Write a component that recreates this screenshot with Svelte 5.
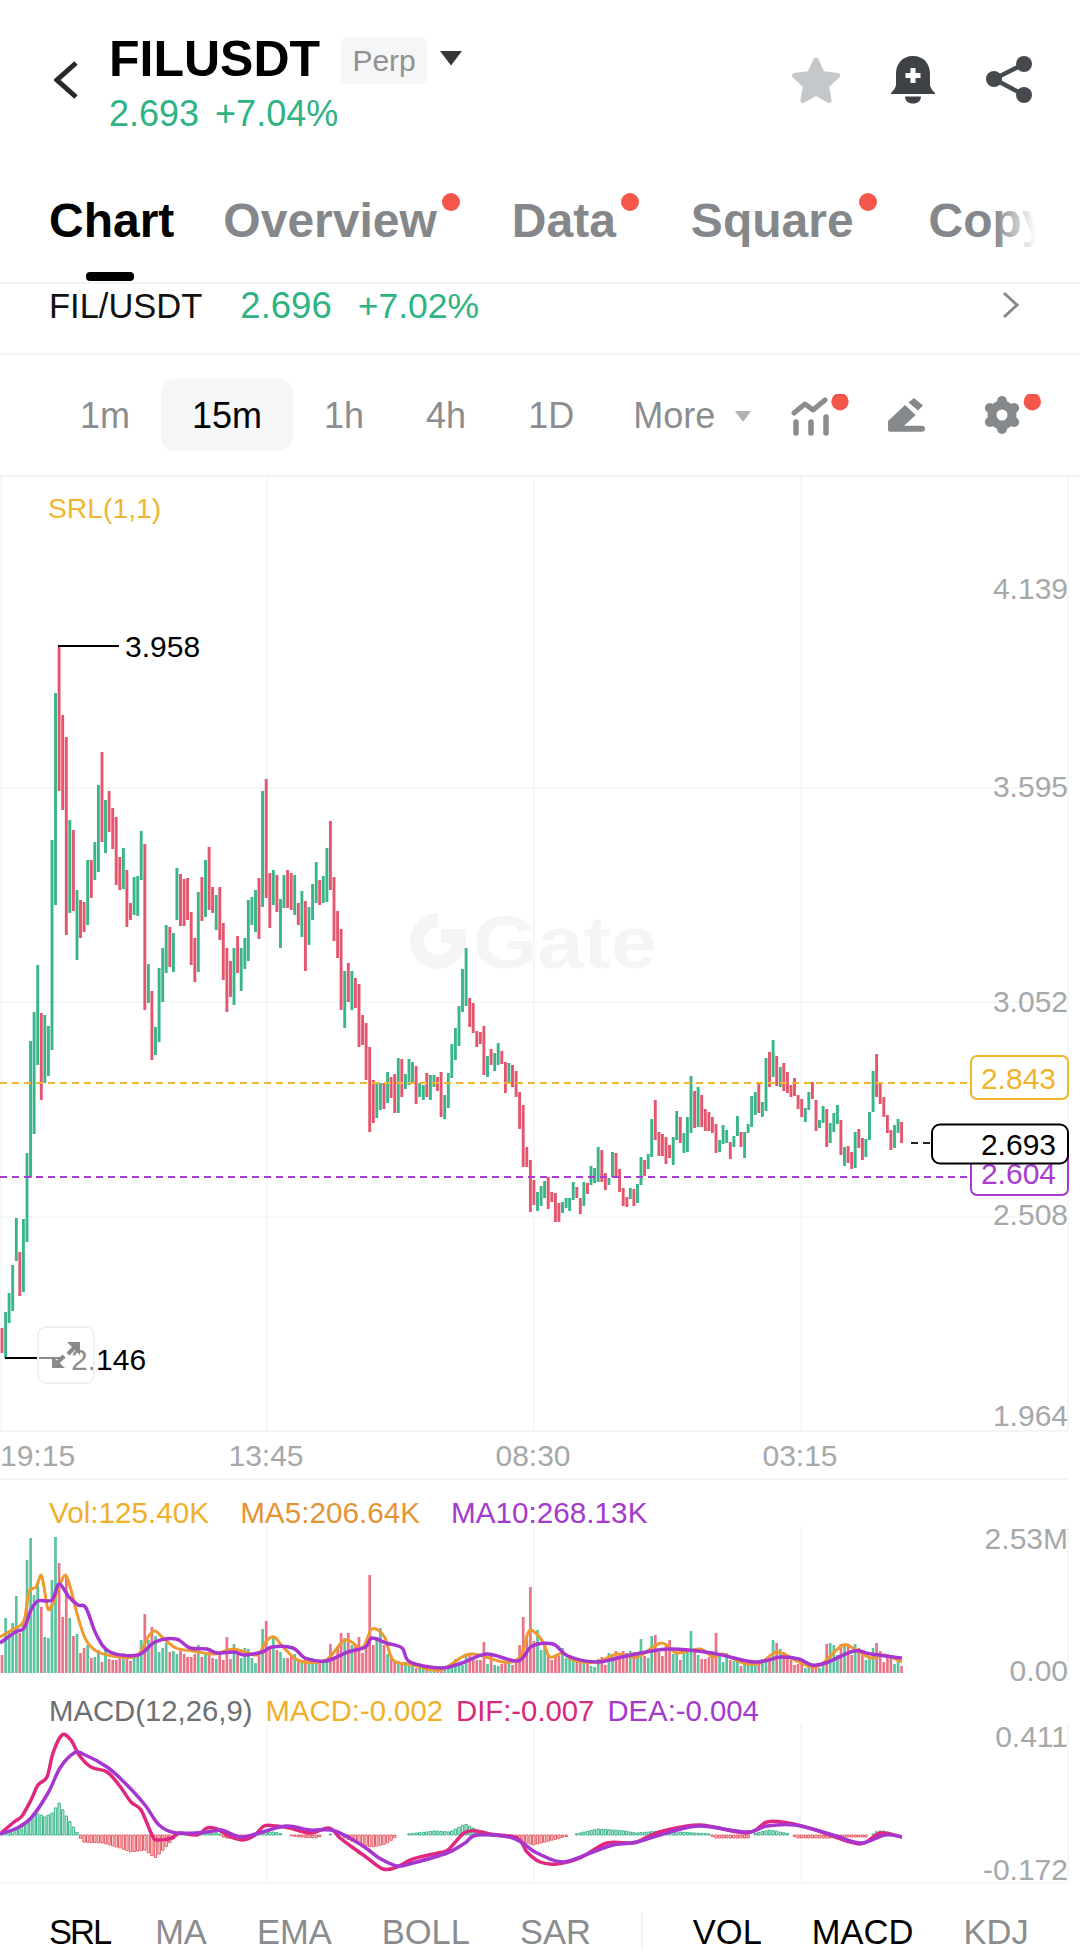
<script>
  const P = 3.57;
  const xOf = (i) => 2 + P * i;

  const raw = `r1328-1353 g1312-1358 g1293-1323 g1265-1311 g1218-1261 r1252-1296 g1219-1292 g1153-1242 g1041-1178 g1012-1134 g965-1065 r1013-1100 g1015-1083 g1026-1076 g840-1050 g693-905 r647-791 r715-810 r737-935 g820-913 r830-911 g890-960 r900-938 r902-932 g860-925 r860-898 g842-880 g785-872 r752-842 g800-853 r791-832 r808-849 r817-885 r857-890 g848-889 r870-927 r903-920 g877-915 g876-916 g831-880 r844-1010 g964-1003 r991-1060 g1027-1055 g968-1042 g948-1002 g925-973 r927-967 g933-972 g868-920 r874-926 r879-926 r878-920 r912-965 r938-982 g892-972 r877-921 g860-917 r847-910 r887-913 g895-930 r887-940 r923-980 r948-1012 r961-997 g948-1005 r936-973 g948-991 g938-969 g900-961 g897-925 g890-932 r878-939 g791-907 r779-898 r873-928 g870-905 r875-912 g899-948 g875-908 r870-908 r873-910 g875-915 r903-925 g891-937 r901-971 g907-945 g884-920 g862-903 r880-905 g876-903 g848-902 r821-890 r877-941 r911-958 r929-1010 g971-1028 r963-1002 g971-1010 r978-1008 r984-1047 r1015-1045 r1023-1080 r1047-1132 r1080-1123 g1082-1118 g1083-1110 r1083-1109 g1072-1103 r1077-1098 r1074-1113 g1058-1113 r1059-1097 g1074-1089 g1059-1085 g1062-1082 r1066-1104 g1083-1097 g1085-1100 r1073-1097 g1075-1100 g1075-1087 r1077-1091 r1072-1117 g1095-1119 g1073-1108 g1044-1078 g1028-1060 g1006-1046 g969-1012 g948-1006 r998-1027 r1003-1033 r1031-1047 r1032-1044 r1026-1075 g1056-1077 r1049-1065 g1053-1071 g1043-1065 r1051-1064 r1062-1093 g1063-1084 r1065-1087 r1071-1097 r1092-1129 r1105-1167 r1147-1167 r1160-1212 r1180-1205 g1192-1211 g1186-1206 g1181-1198 r1177-1209 r1192-1202 r1193-1222 r1203-1222 g1202-1213 g1198-1208 g1198-1211 g1182-1200 r1187-1198 r1198-1214 g1182-1206 r1183-1194 g1166-1185 g1168-1183 g1147-1182 r1150-1182 r1173-1190 g1178-1185 g1152-1177 r1153-1178 r1169-1192 r1188-1206 r1197-1207 g1188-1199 r1189-1206 g1184-1203 g1157-1185 r1160-1176 g1154-1169 g1119-1157 r1100-1140 r1132-1156 r1134-1156 r1137-1164 r1145-1158 g1137-1165 g1111-1140 r1117-1143 g1133-1153 g1117-1152 g1076-1133 r1091-1128 g1087-1127 r1095-1127 r1109-1131 r1112-1131 r1117-1133 r1124-1153 g1140-1152 g1125-1144 g1130-1143 r1142-1159 g1136-1147 g1116-1136 r1132-1147 g1132-1158 g1124-1133 g1096-1127 g1092-1115 r1084-1113 g1102-1117 g1058-1111 r1052-1087 g1040-1077 r1056-1086 g1067-1087 r1063-1091 r1072-1093 r1085-1097 r1078-1096 r1095-1109 r1099-1117 g1108-1122 g1092-1110 r1082-1099 r1100-1131 g1120-1128 g1106-1123 r1109-1147 g1123-1143 g1113-1132 g1105-1124 r1120-1155 g1147-1166 r1146-1163 r1152-1169 g1132-1168 r1129-1148 r1138-1160 g1139-1157 g1112-1140 g1071-1112 r1054-1097 r1083-1104 r1097-1117 r1115-1133 r1130-1150 g1125-1148 g1119-1133 r1122-1143`;

  const candles = raw.split(/\s+/).map((t, i) => {
    const [top, bot] = t.slice(1).split('-').map(Number);
    return { i, x: xOf(i), c: t[0], top, bot };
  });

  const candlePath = (c) =>
    candles.filter((k) => k.c === c).map((k) => `M${k.x.toFixed(1)} ${k.top}V${k.bot}`).join('');

  const ma5 = [[0,1637],[12,1630],[21,1625],[25,1617],[29,1592],[36,1587],[41,1575],[44,1587],[48,1609],[53,1603],[59,1587],[65.5,1575],[71,1590],[78,1617],[86,1640],[98,1652],[121,1657],[138,1655],[148,1637],[155,1631],[162,1637],[176,1648],[193,1651],[214,1654],[234,1649],[257,1655],[265.5,1642],[274,1637],[284,1648],[300,1661],[326,1660],[345,1640],[362,1648],[372,1629],[384.5,1637],[393,1660],[413,1665],[440,1670],[470,1654],[503,1662],[520,1657],[528,1633],[533,1631],[543,1642],[550,1657],[563,1653],[573,1660],[597,1662],[617,1654],[637,1657],[658,1644],[667,1645],[677,1653],[700,1649],[713,1657],[723,1654],[743,1663],[760,1663],[777,1652],[795,1660],[812,1667],[823,1663],[843,1645],[856,1650],[871,1658],[885,1655],[902,1662]];
  const ma10 = [[0,1643],[15.5,1632],[24,1628],[31,1610],[38,1601],[52,1600],[59,1584],[69,1597],[78,1605],[86,1608],[96.5,1635],[110,1652],[138,1655],[155,1642],[176,1639],[190,1648],[207,1649],[217,1653],[234,1652],[245,1655],[262,1652],[272,1647],[293,1648],[305,1658],[326,1661],[348,1652],[365.5,1647],[372,1638],[386,1643],[402,1648],[410,1662],[441,1668],[462,1663],[487,1654],[518,1661],[532,1646],[553,1644],[568,1656],[597,1662],[626,1656],[668,1649],[712,1653],[754,1662],[781,1657],[799,1659],[812,1665],[826,1663],[854,1651],[871,1654],[902,1658]];
  const dif = [[0,1834],[14,1822],[22,1816],[31,1800],[38,1785],[47,1777],[53,1753],[62,1735],[71,1740],[79,1755],[91,1767],[107,1772],[119,1785],[131,1802],[141,1810],[152,1835],[157,1840],[172,1838],[179,1833],[197,1835],[207,1828],[217,1829],[231,1837],[243,1840],[255,1835],[264,1826],[276,1826],[290,1828],[310,1833],[329,1828],[340,1838],[352,1847],[366,1857],[383,1869],[397,1867],[413,1859],[438,1853],[448,1850],[464,1833],[476,1831],[490,1834],[517,1838],[527,1852],[540,1862],[557,1864],[580,1858],[607,1843],[633,1843],[647,1837],[663,1831],[700,1825],[747,1833],[767,1822],[788,1823],[816,1830],[850,1842],[864,1843],[881,1833],[902,1837]];
  const dea = [[0,1834],[17,1828],[31,1818],[48,1793],[60,1768],[74,1753],[83,1754],[107,1767],[124,1782],[145,1805],[159,1825],[176,1833],[207,1832],[221,1830],[241,1837],[259,1833],[286,1826],[310,1830],[331,1830],[348,1837],[366,1848],[379,1858],[397,1866],[413,1863],[447,1853],[465,1843],[477,1835],[513,1838],[537,1853],[563,1862],[593,1852],[613,1845],[637,1842],[670,1832],[700,1826],[747,1832],[767,1826],[795,1825],[833,1835],[861,1843],[885,1835],[902,1837]];
  const histKeys = [[0,0],[5,2],[20,6],[36,22],[45,18],[52,22],[59,32],[65,21],[72,10],[78,1],[79,-1],[83,-7],[103,-8],[120,-13],[131,-17],[145,-15],[155,-23],[165,-13],[174,-3],[180,1],[200,3],[215,3],[222,0],[224,-3],[245,-4],[250,0],[265,3],[275,3],[285,0],[300,-2],[315,-3],[325,0],[330,1],[340,0],[345,-3],[358,-9],[372,-12],[386,-9],[397,-1],[400,0],[407,1],[435,4],[450,3],[465,11],[477,5],[483,0],[490,-1],[510,-3],[533,-10],[545,-7],[568,-1],[572,0],[580,2],[598,6],[625,4],[636,2],[660,4],[680,3],[710,1],[714,-3],[750,-3],[752,0],[756,2],[770,5],[790,1],[797,-3],[833,-3],[847,-2],[867,-2],[873,1],[878,4],[885,4],[895,0],[902,0]];

  function smooth(pts) {
    let d = `M${pts[0][0]} ${pts[0][1]}`;
    for (let i = 0; i < pts.length - 1; i++) {
      const p0 = pts[i - 1] || pts[i];
      const p1 = pts[i];
      const p2 = pts[i + 1];
      const p3 = pts[i + 2] || p2;
      const c1x = p1[0] + (p2[0] - p0[0]) / 6;
      const c1y = p1[1] + (p2[1] - p0[1]) / 6;
      const c2x = p2[0] - (p3[0] - p1[0]) / 6;
      const c2y = p2[1] - (p3[1] - p1[1]) / 6;
      d += `C${c1x.toFixed(1)} ${c1y.toFixed(1)} ${c2x.toFixed(1)} ${c2y.toFixed(1)} ${p2[0]} ${p2[1]}`;
    }
    return d;
  }

  function lerp(keys, x) {
    for (let i = 0; i < keys.length - 1; i++) {
      if (x >= keys[i][0] && x <= keys[i + 1][0]) {
        const t = (x - keys[i][0]) / (keys[i + 1][0] - keys[i][0] || 1);
        return keys[i][1] + t * (keys[i + 1][1] - keys[i][1]);
      }
    }
    return keys[keys.length - 1][1];
  }

  let seed = 1337;
  const rnd = () => {
    seed = (seed * 16807) % 2147483647;
    return seed / 2147483647;
  };

  const early = [1655,1618,1633,1623,1596,1633,1623,1560,1538,1595,1583,1607,1637,1638,1580,1537,1563,1617,1577,1618,1636,1634,1653,1648,1645,1658,1657,1650];
  const spikes = {39:1640,40:1614,41:1640,42:1627,63:1637,73:1629,74:1621,92:1644,95:1633,96:1638,100:1637,103:1575,135:1642,145:1645,146:1617,148:1587,179:1639,182:1636,183:1635,193:1631,200:1633,216:1640,217:1643,231:1644,232:1643,233:1645,239:1644,244:1648,245:1643,251:1660,252:1666};
  const volTop = candles.map((k) => {
    if (k.i < early.length) return early[k.i];
    if (spikes[k.i]) return spikes[k.i];
    const h = (1673 - lerp(ma5, k.x)) * (0.55 + 0.75 * rnd());
    return Math.round(1673 - Math.max(h, 3));
  });
  const volPath = (c) =>
    candles.filter((k) => k.c === c).map((k) => `M${k.x.toFixed(1)} 1673V${volTop[k.i]}`).join('');

  const histPath = (up) => {
    let d = '';
    candles.forEach((k) => {
      const h = lerp(histKeys, k.x);
      if (Math.abs(h) < 0.8 || h > 0 !== up) return;
      d += `M${(k.x - 1.2).toFixed(1)} 1835h2.4v${(-h).toFixed(1)}h-2.4z`;
    });
    return d;
  };

  const grid = [267, 534, 801, 1068];
  const priceAxis = [['4.139', 599], ['3.595', 797], ['3.052', 1012], ['2.508', 1225], ['1.964', 1426]];
  const rows = [788, 1002, 1217];
  const times = ['19:15', '13:45', '08:30', '03:15'];
  const tabs = [
    { t: 'Chart', active: true },
    { t: 'Overview', dot: true },
    { t: 'Data', dot: true },
    { t: 'Square', dot: true },
    { t: 'Copy' }
  ];
  const intervals = ['1m', '15m', '1h', '4h', '1D'];
  const gearTeeth = [0, 60, 120, 180, 240, 300];
</script>

<div class="page">
  <header class="header">
    <svg class="back" viewBox="0 0 24 38"><path d="M22 2 3 19 22 36" /></svg>
    <div class="title">
      <div class="title-row">
        <span class="symbol">FILUSDT</span>
        <span class="perp">Perp</span>
        <svg class="caret" viewBox="0 0 24 16"><path d="M1 1H23L12 15.500Z" /></svg>
      </div>
      <div class="quote"><span>2.693</span><span>+7.04%</span></div>
    </div>
    <div class="actions">
      <svg class="star" viewBox="0 0 52 48"><path d="M26 4 32.400 17.500 47.500 19.600 36.500 30 39.200 44.500 26 37.400 12.800 44.500 15.500 30 4.500 19.600 19.600 17.500Z" /></svg>
      <svg class="bell" viewBox="0 0 44 48">
        <path d="M22 0C11 0 5 8 5 18V28C5 32 2 35 0 37V38H44V37C42 35 39 32 39 28V18C39 8 33 0 22 0Z" />
        <path d="M14 40.500H30C30 45 26.500 47.500 22 47.500S14 45 14 40.500Z" />
        <rect class="plus" x="19.500" y="12" width="5" height="15" />
        <rect class="plus" x="14.500" y="17" width="15" height="5" />
      </svg>
      <svg class="share" viewBox="0 0 48 48">
        <circle cx="39" cy="8" r="8" /><circle cx="9" cy="23" r="8" /><circle cx="39" cy="39" r="8" />
        <path d="M39 8 9 23 39 39" />
      </svg>
    </div>
  </header>

  <nav class="tabs">
    {#each tabs as tab}
      <div class="tab" class:active={tab.active} class:dotted={tab.dot}>
        {tab.t}
        {#if tab.dot}<i class="dot"></i>{/if}
      </div>
    {/each}
    <div class="fade"></div>
  </nav>

  <div class="pair">
    <span class="pair-name">FIL/USDT</span>
    <span class="pair-price">2.696</span>
    <span class="pair-pct">+7.02%</span>
    <svg class="pair-chev" viewBox="0 0 18 28"><path d="M2 2 15 14 2 26" /></svg>
  </div>

  <div class="intervals">
    {#each intervals as iv}
      <div class="iv" class:on={iv === '15m'}>{iv}</div>
    {/each}
    <div class="more">More<svg viewBox="0 0 16 11"><path d="M0 0H16L8 11Z" /></svg></div>
    <div class="tools">
      <svg class="tool t-ind" viewBox="0 0 60 42">
        <path class="tl" d="M3 19 14 10 22 16 34 6" />
        <path class="tb" d="M5 28V39M20 28V39M35 23V39" />
        <circle class="td" cx="49" cy="7.700" r="8.700" />
      </svg>
      <svg class="tool t-pen" viewBox="0 0 38 36">
        <path d="M1 24 18 8 28.700 18 17 28.700H35A3 3 0 0 1 35 34.700H3A2 2 0 0 1 1 32.700Z" />
        <path d="M21.500 5.500 27 1 36 8.500 31 13.500Z" />
      </svg>
      <svg class="tool t-gear" viewBox="0 0 58 42">
        <g transform="translate(19 21)">
          <circle class="ring" r="10" />
          {#each gearTeeth as a}
            <path class="tooth" d="M0 -11V-14" transform="rotate({a})" />
          {/each}
        </g>
        <circle class="td" cx="49.300" cy="7.700" r="8.700" />
      </svg>
    </div>
  </div>

  <section class="main-chart">
    <svg class="plot" width="1080" height="953" viewBox="0 477 1080 953">
      {#each grid as x}<line class="g" x1={x} x2={x} y1="477" y2="1430" />{/each}
      <line class="g" x1="1" x2="1" y1="477" y2="1430" />
      {#each rows as y}<line class="g" x1="0" x2="1068" y1={y} y2={y} />{/each}

      <g class="mark">
        <path d="M438 920A21 21 0 1 0 459 941" />
        <rect x="441" y="929" width="25" height="14" />
        <text x="473" y="968" textLength="184" lengthAdjust="spacingAndGlyphs">Gate</text>
      </g>

      <text class="srl" x="48" y="518">SRL(1,1)</text>

      <path class="cg" d={candlePath('g')} />
      <path class="cr" d={candlePath('r')} />

      <line class="dash amber" x1="0" x2="968" y1="1083" y2="1083" />
      <line class="dash purple" x1="0" x2="968" y1="1177" y2="1177" />

      <path class="hl" d="M59 647V646H119M5 1358H65" />
      <text class="val" x="125" y="657">3.958</text>
      <text class="val" x="71" y="1370">2.146</text>

      {#each priceAxis as [t, y]}
        <text class="ax" x="1068" {y}>{t}</text>
      {/each}

      <rect class="tag amber-b" x="971" y="1056" width="97" height="43" rx="6" />
      <text class="tagtxt amber-t" x="1056" y="1089">2.843</text>
      <rect class="tag purple-b" x="971" y="1150" width="97" height="45" rx="6" />
      <text class="tagtxt purple-t" x="1056" y="1184">2.604</text>
      <path class="lastdash" d="M911 1143H930" />
      <rect class="tag black-b" x="932" y="1124.500" width="136" height="39" rx="8" />
      <text class="tagtxt black-t" x="1056" y="1155">2.693</text>
    </svg>
    <div class="expand">
      <svg viewBox="0 0 58 58">
        <path class="ex" d="M30 16H43V29ZM15 42V30L28 42Z" />
        <path class="exl" d="M37 22 31 28M21 36 27 30" />
      </svg>
    </div>
  </section>

  <div class="times">
    {#each times as t, i}<span class:first={i === 0}>{t}</span>{/each}
  </div>

  <section class="panel vol">
    <div class="legend">
      <span class="c-a">Vol:125.40K</span><span class="c-o">MA5:206.64K</span><span class="c-p">MA10:268.13K</span>
    </div>
    <svg class="plot" width="1080" height="154" viewBox="0 1526 1080 154">
      {#each grid as x}<line class="g" x1={x} x2={x} y1="1526" y2="1680" />{/each}
      <path class="vg" d={volPath('g')} />
      <path class="vr" d={volPath('r')} />
      <path class="l-o" d={smooth(ma5)} />
      <path class="l-p" d={smooth(ma10)} />
      <text class="ax" x="1068" y="1549">2.53M</text>
      <text class="ax" x="1068" y="1681">0.00</text>
    </svg>
  </section>

  <section class="panel macd">
    <div class="legend tight">
      <span class="c-g">MACD(12,26,9)</span><span class="c-a">MACD:-0.002</span><span class="c-m">DIF:-0.007</span><span class="c-p">DEA:-0.004</span>
    </div>
    <svg class="plot" width="1080" height="160" viewBox="0 1724 1080 160">
      {#each grid as x}<line class="g" x1={x} x2={x} y1="1724" y2="1882" />{/each}
      <line class="g" x1="0" x2="1068" y1="1883" y2="1883" />
      <path class="hg" d={histPath(true)} />
      <path class="hr" d={histPath(false)} />
      <path class="l-m" d={smooth(dif)} />
      <path class="l-p" d={smooth(dea)} />
      <text class="ax" x="1068" y="1747">0.411</text>
      <text class="ax" x="1068" y="1880">-0.172</text>
    </svg>
  </section>

  <footer class="inds">
    <span class="on first-ind">SRL</span><span>MA</span><span>EMA</span><span>BOLL</span><span>SAR</span>
    <i class="sep"></i>
    <span class="on">VOL</span><span class="on">MACD</span><span>KDJ</span>
  </footer>
</div>

<style>
  :global(body) {
    margin: 0;
    background: #fff;
  }
  .page {
    width: 1080px;
    height: 1958px;
    overflow: hidden;
    font-family: "Liberation Sans", Arial, sans-serif;
    color: #000;
  }
  svg {
    display: block;
  }
  .plot {
    overflow: visible;
  }

  .header {
    height: 180px;
    box-sizing: border-box;
    padding: 34px 0 0 54px;
    display: flex;
    align-items: flex-start;
  }
  .back {
    width: 24px;
    height: 38px;
    margin-top: 27px;
    fill: none;
    stroke: #26282b;
    stroke-width: 5;
  }
  .title {
    margin-left: 31px;
  }
  .title-row {
    display: flex;
    align-items: center;
    height: 50px;
  }
  .symbol {
    font-size: 50px;
    font-weight: 700;
    line-height: 50px;
  }
  .perp {
    margin-left: 21px;
    margin-top: 2px;
    width: 86px;
    height: 47px;
    line-height: 47px;
    text-align: center;
    font-size: 30px;
    color: #8f9194;
    background: #f5f6f7;
    border-radius: 6px;
  }
  .caret {
    width: 24px;
    height: 16px;
    margin: -2px 0 0 12px;
    fill: #35383b;
  }
  .quote {
    margin-top: 10px;
    display: flex;
    gap: 16px;
    font-size: 36px;
    line-height: 40px;
    color: #2fb383;
  }
  .actions {
    margin-left: auto;
    margin-top: 22px;
    padding-right: 47px;
    display: flex;
    align-items: flex-start;
  }
  .star {
    width: 52px;
    height: 48px;
    fill: #c5c8ca;
    stroke: #c5c8ca;
    stroke-width: 5;
    stroke-linejoin: round;
  }
  .bell {
    margin-left: 49px;
    width: 44px;
    height: 48px;
    fill: #3f4246;
  }
  .plus {
    fill: #fff;
  }
  .share {
    margin-left: 50px;
    width: 48px;
    height: 48px;
    fill: #46494d;
  }
  .share path {
    fill: none;
    stroke: #46494d;
    stroke-width: 4.500;
  }

  .tabs {
    position: relative;
    height: 104px;
    box-sizing: border-box;
    border-bottom: 2px solid #f2f3f4;
    padding: 16px 0 0 49px;
    display: flex;
    gap: 49px;
    overflow: hidden;
  }
  .tab {
    position: relative;
    font-size: 48px;
    font-weight: 700;
    line-height: 50px;
    color: #85878a;
    white-space: nowrap;
  }
  .tab.active {
    color: #000;
  }
  .tab.active::after {
    content: "";
    position: absolute;
    left: 37px;
    top: 76px;
    width: 48px;
    height: 9px;
    border-radius: 4px;
    background: #000;
  }
  .tab.dotted {
    padding-right: 26px;
  }
  .dot {
    position: absolute;
    right: 3px;
    top: -3px;
    width: 18px;
    height: 18px;
    border-radius: 50%;
    background: #f4574a;
  }
  .fade {
    position: absolute;
    left: 995px;
    top: 0;
    width: 85px;
    height: 90px;
    background: linear-gradient(90deg, rgba(255, 255, 255, 0) 0, #fff 48%);
  }

  .pair {
    height: 71px;
    box-sizing: border-box;
    border-bottom: 2px solid #f2f3f4;
    padding: 2px 0 0 49px;
    display: flex;
    align-items: flex-start;
    font-size: 36px;
    line-height: 40px;
  }
  .pair-name {
    font-size: 34.500px;
    color: #111;
  }
  .pair-price {
    margin-left: 38px;
    font-size: 36.500px;
    color: #2fb383;
  }
  .pair-pct {
    margin-left: 26px;
    font-size: 35.500px;
    color: #2fb383;
  }
  .pair-chev {
    margin: 5px 0 0 auto;
    margin-right: 60px;
    width: 18px;
    height: 28px;
    fill: none;
    stroke: #85888b;
    stroke-width: 3;
  }

  .intervals {
    height: 122px;
    box-sizing: border-box;
    border-bottom: 2px solid #f2f3f4;
    padding: 0 39px 0 49px;
    display: flex;
    align-items: center;
    font-size: 36px;
    color: #8b8d90;
  }
  .iv {
    height: 72px;
    line-height: 74px;
    padding: 0 31px;
    border-radius: 14px;
  }
  .iv.on {
    background: #f5f6f7;
    color: #000;
  }
  .more {
    margin-left: 28px;
    padding-top: 2px;
    display: flex;
    align-items: center;
    gap: 20px;
  }
  .more svg {
    width: 16px;
    height: 11px;
    fill: #b0b3b5;
  }
  .tools {
    margin-left: auto;
    height: 42px;
    display: flex;
    align-items: center;
  }
  .tool {
    flex: none;
  }
  .t-ind {
    width: 60px;
    height: 42px;
    fill: none;
  }
  .tl,
  .tb {
    fill: none;
    stroke: #8a8d90;
    stroke-linecap: round;
    stroke-linejoin: round;
  }
  .tl {
    stroke-width: 5;
  }
  .tb {
    stroke-width: 5.500;
  }
  .td {
    fill: #f4574a;
  }
  .t-pen {
    margin-left: 36px;
    width: 38px;
    height: 36px;
    fill: #86898c;
  }
  .t-gear {
    margin-left: 58px;
    width: 58px;
    height: 42px;
  }
  .ring {
    fill: none;
    stroke: #86898c;
    stroke-width: 9;
  }
  .tooth {
    stroke: #86898c;
    stroke-width: 10;
    stroke-linecap: round;
  }

  .main-chart {
    position: relative;
    height: 953px;
  }
  .g {
    stroke: #f3f4f5;
    stroke-width: 1.500;
  }
  .mark path {
    fill: none;
    stroke: #f4f5f6;
    stroke-width: 14;
  }
  .mark rect {
    fill: #f4f5f6;
  }
  .mark text {
    font-size: 74px;
    font-weight: 700;
    fill: #f4f5f6;
  }
  .srl {
    font-size: 28.300px;
    fill: #efb62f;
  }
  .cg,
  .cr,
  .vg,
  .vr {
    fill: none;
    stroke-width: 2.900;
  }
  .vg,
  .vr {
    stroke-width: 2.700;
  }
  .cg {
    stroke: #3ab58a;
  }
  .cr {
    stroke: #e4566d;
  }
  .vg {
    stroke: #5cc3a1;
  }
  .vr {
    stroke: #ea7487;
  }
  .dash {
    stroke-width: 2;
    stroke-dasharray: 7 5;
  }
  .amber {
    stroke: #f0b42d;
  }
  .purple {
    stroke: #a93bd0;
  }
  .hl {
    fill: none;
    stroke: #000;
    stroke-width: 2;
  }
  .val {
    font-size: 30px;
    fill: #000;
  }
  .ax {
    font-size: 30px;
    fill: #a6a8aa;
    text-anchor: end;
  }
  .tag {
    fill: #fff;
    stroke-width: 2;
  }
  .amber-b {
    stroke: #f0b42d;
  }
  .purple-b {
    stroke: #a93bd0;
  }
  .black-b {
    stroke: #000;
  }
  .tagtxt {
    font-size: 30px;
    text-anchor: end;
  }
  .amber-t {
    fill: #f0b42d;
  }
  .purple-t {
    fill: #a93bd0;
  }
  .black-t {
    fill: #000;
  }
  .lastdash {
    fill: none;
    stroke: #222;
    stroke-width: 2;
    stroke-dasharray: 7 5;
  }
  .expand {
    position: absolute;
    left: 37px;
    top: 849px;
    width: 58px;
    height: 58px;
    box-sizing: border-box;
    border: 2px solid #eff0f1;
    border-radius: 9px;
    background: rgba(255, 255, 255, 0.55);
  }
  .expand svg {
    width: 58px;
    height: 58px;
    margin: -2px;
  }
  .ex {
    fill: #8a8a8a;
  }
  .exl {
    fill: none;
    stroke: #8a8a8a;
    stroke-width: 4;
  }

  .times {
    width: 1068px;
    height: 50px;
    box-sizing: border-box;
    border-top: 2px solid #f3f4f5;
    border-bottom: 2px solid #f3f4f5;
    display: grid;
    grid-template-columns: 132.500px repeat(3, 267px);
    font-size: 30px;
    line-height: 48px;
    color: #a6a8aa;
    text-align: center;
  }
  .times .first {
    text-align: left;
  }

  .panel {
    display: flex;
    flex-direction: column;
  }
  .vol {
    height: 200px;
    padding-top: 18px;
    box-sizing: border-box;
  }
  .macd {
    height: 204px;
    padding-top: 16px;
    box-sizing: border-box;
  }
  .legend {
    flex: none;
    height: 28px;
    line-height: 30px;
    padding-left: 49px;
    display: flex;
    gap: 31px;
    font-size: 29.700px;
    white-space: nowrap;
  }
  .legend.tight {
    gap: 13px;
    font-size: 29.300px;
  }
  .c-a {
    color: #efb02a;
  }
  .c-o {
    color: #e59435;
  }
  .c-p {
    color: #a43acb;
  }
  .c-g {
    color: #6d6f72;
  }
  .c-m {
    color: #d62a7a;
  }
  .l-o,
  .l-p,
  .l-m {
    fill: none;
    stroke-linejoin: round;
  }
  .l-o {
    stroke: #ee9a2e;
    stroke-width: 3;
  }
  .l-p {
    stroke: #a636cf;
    stroke-width: 3.500;
  }
  .l-m {
    stroke: #e0287f;
    stroke-width: 3.500;
  }
  .hg {
    fill: rgba(60, 182, 139, 0.35);
    stroke: #3cb68b;
    stroke-width: 1;
  }
  .hr {
    fill: rgba(232, 90, 100, 0.3);
    stroke: #e85a64;
    stroke-width: 1;
  }

  .inds {
    height: 74px;
    box-sizing: border-box;
    padding: 28px 0 0 49px;
    display: flex;
    align-items: flex-start;
    gap: 50px;
    font-size: 34.500px;
    line-height: 40px;
    color: #8a8c8f;
  }
  .inds .on {
    color: #000;
  }
  .inds .first-ind {
    letter-spacing: -2px;
    margin-right: -5px;
  }
  .sep {
    width: 2px;
    height: 37px;
    background: #f3f4f5;
  }
</style>
